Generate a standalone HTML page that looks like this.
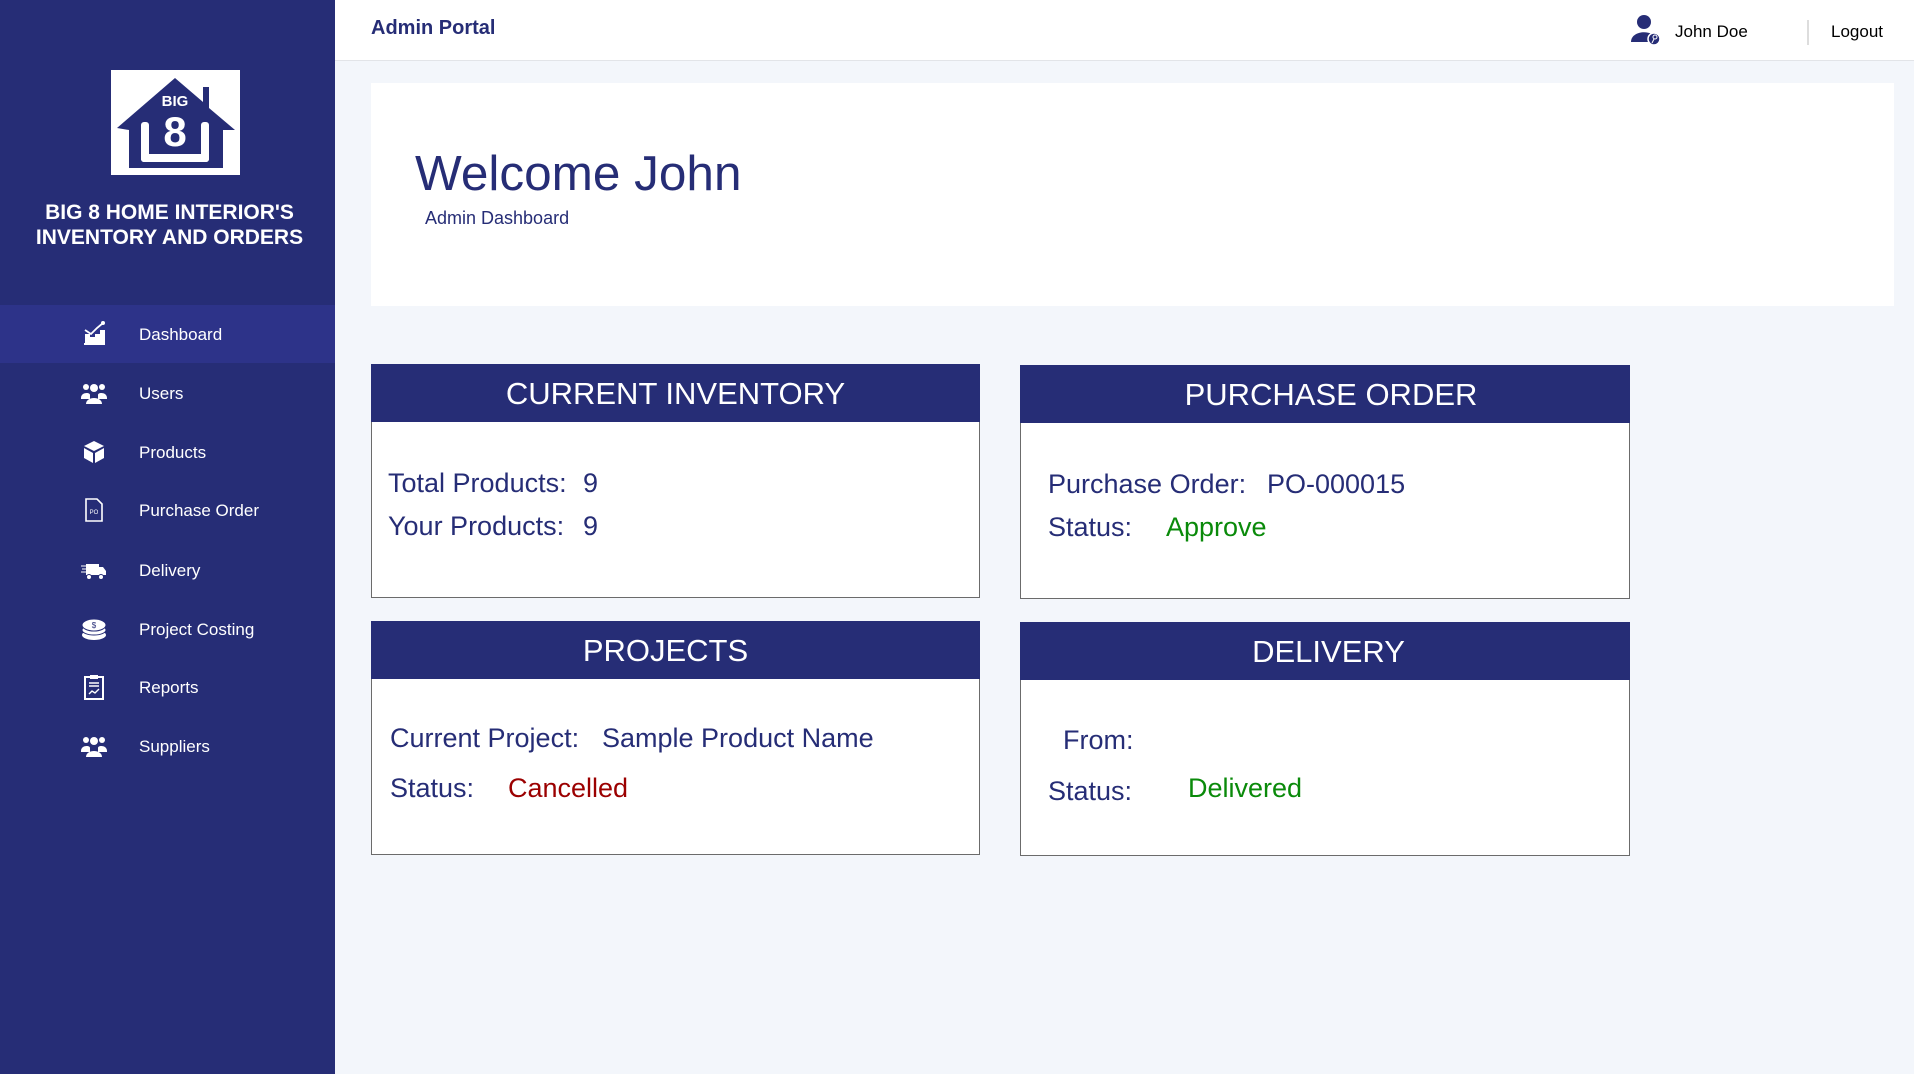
<!DOCTYPE html>
<html><head><meta charset="utf-8"><style>
*{margin:0;padding:0;box-sizing:border-box}
body{width:1914px;height:1074px;background:#f3f6fb;font-family:"Liberation Sans",Arial,sans-serif;position:relative;overflow:hidden;color:#262d76}
.sb{position:absolute;left:0;top:0;width:335px;height:1074px;background:#262d76}
.logo{position:absolute;left:111px;top:70px;width:129px;height:105px;background:#fff}
.brand{position:absolute;left:2px;width:335px;top:200px;text-align:center;color:#fff;font-weight:bold;font-size:21px;line-height:25px}
.active{position:absolute;left:0;top:305px;width:335px;height:58px;background:#2d3389}
.nav{position:absolute;left:139px;color:#fff;font-size:17px;line-height:20px}
.ic{position:absolute;left:81px;width:26px;height:26px}
.hdr{position:absolute;left:335px;top:0;width:1579px;height:61px;background:#fff;border-bottom:1px solid #e2e4e8}
.t{position:absolute;white-space:nowrap}
.card{position:absolute;background:#fff;border:1px solid #6b6b6b}
.card .h{height:58px;background:#262d76;color:#fff;font-size:31px;text-align:center;line-height:60px;margin:-1px -1px 0 -1px}
.b{font-size:27px;line-height:30px}
</style></head><body>
<div class="sb">
  <div class="logo">
    <svg width="129" height="105" viewBox="0 0 129 105">
      <polygon points="6,58 64,8 92,32 92,17 98,17 98,38 124,60 112,60 112,98 18,98 18,60" fill="#262d76"/>
      <text x="64" y="36" font-family="Liberation Sans" font-weight="bold" font-size="15" fill="#fff" text-anchor="middle">BIG</text>
      <text x="64" y="76" font-family="Liberation Sans" font-weight="bold" font-size="42" fill="#fff" text-anchor="middle">8</text>
      <rect x="30" y="52" width="8" height="40" rx="3" fill="#fff"/>
      <rect x="90" y="52" width="8" height="40" rx="3" fill="#fff"/>
      <rect x="30" y="84" width="68" height="8" rx="3" fill="#fff"/>
    </svg>
  </div>
  <div class="brand">BIG 8 HOME INTERIOR'S<br>INVENTORY AND ORDERS</div>
  <div class="active"></div>
  <svg class="ic" style="top:320px" viewBox="0 0 26 26"><path d="M3 24h21M5 23v-8h3v8M10 23v-5h3v5M15 23v-8h3v8M20 23v-12h3v12" stroke="#fff" stroke-width="2" fill="#fff"/><path d="M4 10l6 4 6-6 6-5" stroke="#fff" stroke-width="1.8" fill="none"/><circle cx="22" cy="3" r="2" fill="#fff"/></svg>
  <div class="nav" style="top:325px">Dashboard</div>
  <svg class="ic" style="top:380px" viewBox="0 0 26 26"><circle cx="13" cy="8" r="4" fill="#fff"/><circle cx="5" cy="7" r="3" fill="#fff"/><circle cx="21" cy="7" r="3" fill="#fff"/><path d="M5 24c0-8 16-8 16 0z" fill="#fff"/><path d="M0 18c0-6 9-6 9-3v4H0zM26 18c0-6-9-6-9-3v4h9z" fill="#fff"/></svg>
  <div class="nav" style="top:384px">Users</div>
  <svg class="ic" style="top:439px" viewBox="0 0 26 26"><path d="M13 2l10 5-10 5-10-5z M3 9l9 5v10l-9-5z M23 9l-9 5v10l9-5z" fill="#fff"/></svg>
  <div class="nav" style="top:443px">Products</div>
  <svg class="ic" style="top:497px" viewBox="0 0 26 26"><path d="M5 2h11l5 5v17H5z" fill="none" stroke="#fff" stroke-width="1.6"/><text x="13" y="17" font-size="6" fill="#fff" text-anchor="middle" font-family="Liberation Sans">PO</text></svg>
  <div class="nav" style="top:501px">Purchase Order</div>
  <svg class="ic" style="top:557px" viewBox="0 0 26 26"><path d="M5 7h13v11H5zM18 10h4l3 4v4h-7z" fill="#fff"/><path d="M0 9h6M1 12h5M0 15h6" stroke="#fff"/><circle cx="8" cy="20" r="2.5" fill="#fff" stroke="#262d76"/><circle cx="20" cy="20" r="2.5" fill="#fff" stroke="#262d76"/></svg>
  <div class="nav" style="top:561px">Delivery</div>
  <svg class="ic" style="top:616px" viewBox="0 0 26 26"><ellipse cx="13" cy="19" rx="12" ry="5" fill="#fff"/><ellipse cx="13" cy="14" rx="12" ry="5" fill="#fff" stroke="#262d76"/><ellipse cx="13" cy="9" rx="12" ry="6" fill="#fff" stroke="#262d76"/><text x="13" y="12" font-size="8" fill="#262d76" text-anchor="middle">$</text></svg>
  <div class="nav" style="top:620px">Project Costing</div>
  <svg class="ic" style="top:674px" viewBox="0 0 26 26"><rect x="4" y="3" width="18" height="22" fill="none" stroke="#fff" stroke-width="2"/><rect x="9" y="1" width="8" height="4" fill="#fff"/><path d="M8 9h10M8 12h10M8 20l3-3 3 2 4-4" stroke="#fff" stroke-width="1.4" fill="none"/></svg>
  <div class="nav" style="top:678px">Reports</div>
  <svg class="ic" style="top:733px" viewBox="0 0 26 26"><circle cx="13" cy="8" r="4" fill="#fff"/><circle cx="5" cy="7" r="3" fill="#fff"/><circle cx="21" cy="7" r="3" fill="#fff"/><path d="M5 24c0-8 16-8 16 0z" fill="#fff"/><path d="M0 18c0-6 9-6 9-3v4H0zM26 18c0-6-9-6-9-3v4h9z" fill="#fff"/></svg>
  <div class="nav" style="top:737px">Suppliers</div>
</div>

<div class="hdr"></div>
<div class="t" style="left:371px;top:17px;font-size:20px;font-weight:bold">Admin Portal</div>
<svg class="t" style="left:1630px;top:14px" width="32" height="32" viewBox="0 0 32 32"><circle cx="14" cy="8" r="7" fill="#262d76"/><path d="M1 28c0-13 26-13 26 0z" fill="#262d76"/><circle cx="24" cy="25" r="6" fill="#262d76" stroke="#fff" stroke-width="1.5"/><circle cx="25" cy="23" r="2" fill="none" stroke="#fff"/><path d="M24 25l-2 4" stroke="#fff"/></svg>
<div class="t" style="left:1675px;top:22px;font-size:17px;color:#000">John Doe</div>
<div class="t" style="left:1807px;top:20px;width:2px;height:25px;background:#ddd"></div>
<div class="t" style="left:1831px;top:22px;font-size:17px;color:#000">Logout</div>

<div class="t" style="left:371px;top:83px;width:1523px;height:223px;background:#fff"></div>
<div class="t" style="left:415px;top:145px;font-size:49.5px">Welcome John</div>
<div class="t" style="left:425px;top:208px;font-size:18px">Admin Dashboard</div>

<div class="card" style="left:371px;top:364px;width:609px;height:234px"><div class="h">CURRENT INVENTORY</div></div>
<div class="t b" style="left:388px;top:468px">Total Products:</div>
<div class="t b" style="left:583px;top:468px">9</div>
<div class="t b" style="left:388px;top:511px">Your Products:</div>
<div class="t b" style="left:583px;top:511px">9</div>

<div class="card" style="left:1020px;top:365px;width:610px;height:234px"><div class="h" style="padding-left:12px">PURCHASE ORDER</div></div>
<div class="t b" style="left:1048px;top:469px">Purchase Order:</div>
<div class="t b" style="left:1267px;top:469px">PO-000015</div>
<div class="t b" style="left:1048px;top:512px">Status:</div>
<div class="t b" style="left:1166px;top:512px;color:#0a8a0a">Approve</div>

<div class="card" style="left:371px;top:621px;width:609px;height:234px"><div class="h" style="padding-right:20px">PROJECTS</div></div>
<div class="t b" style="left:390px;top:723px">Current Project:</div>
<div class="t b" style="left:602px;top:723px">Sample Product Name</div>
<div class="t b" style="left:390px;top:773px">Status:</div>
<div class="t b" style="left:508px;top:773px;color:#9b0000">Cancelled</div>

<div class="card" style="left:1020px;top:622px;width:610px;height:234px"><div class="h" style="padding-left:7px">DELIVERY</div></div>
<div class="t b" style="left:1063px;top:725px">From:</div>
<div class="t b" style="left:1048px;top:776px">Status:</div>
<div class="t b" style="left:1188px;top:773px;color:#0a8a0a">Delivered</div>
</body></html>
